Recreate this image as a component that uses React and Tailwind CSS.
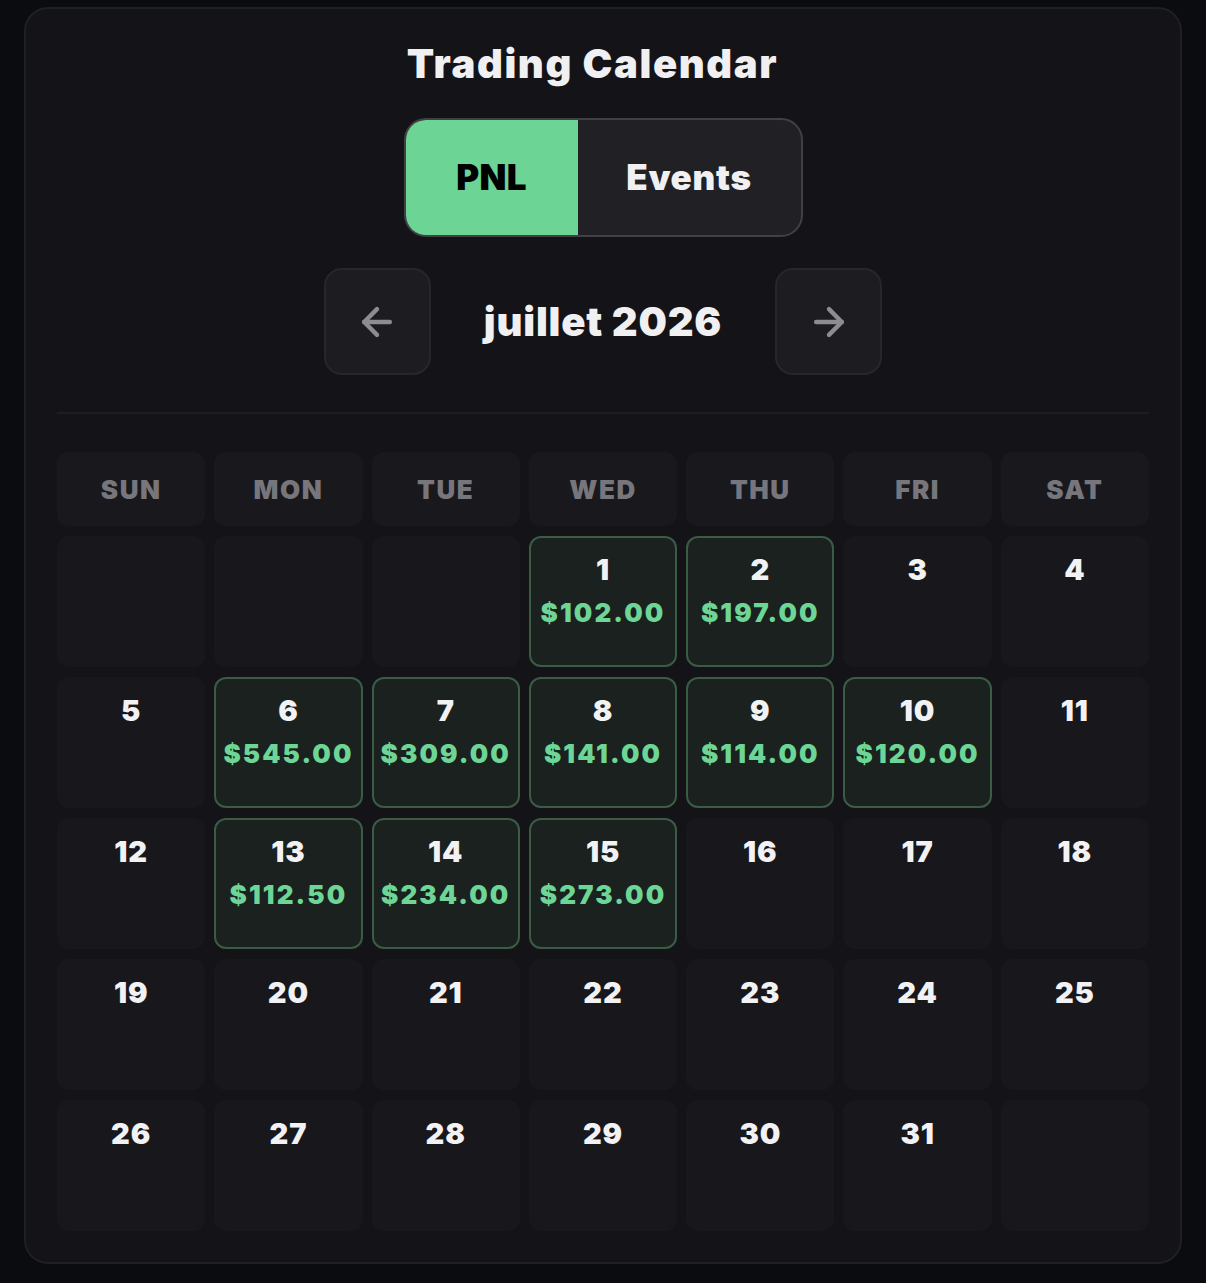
import { ArrowLeft, ArrowRight } from 'lucide-react';

const DAYS = ['SUN', 'MON', 'TUE', 'WED', 'THU', 'FRI', 'SAT'];

// pnl par jour (juillet 2026)
const PNL = {
  1: 102, 2: 197, 6: 545, 7: 309, 8: 141, 9: 114, 10: 120,
  13: 112.5, 14: 234, 15: 273,
};

const fmt = (v) => '$' + v.toFixed(2);

function DayCell({ day }) {
  if (!day) {
    return <div className="h-[131px] rounded-[12px] bg-[#18181c]" />;
  }
  const pnl = PNL[day];
  return (
    <div
      className={
        pnl
          ? 'h-[131px] rounded-[12px] border-2 border-[#3a5c45] bg-[#1a211e] pt-[14px] flex flex-col items-center'
          : 'h-[131px] rounded-[12px] border-2 border-transparent bg-[#18181c] pt-[14px] flex flex-col items-center'
      }
    >
      <div className="text-[29px] leading-[36px] font-black tracking-[0.03em] text-[#f2f2f4]">{day}</div>
      {pnl && (
        <div className="mt-[9px] text-[26px] leading-[32px] font-black tracking-[0.08em] text-[#6dd595]">
          {fmt(pnl)}
        </div>
      )}
    </div>
  );
}

export default function App() {
  // juillet 2026 commence un mercredi
  const cells = [null, null, null];
  for (let d = 1; d <= 31; d++) cells.push(d);
  while (cells.length % 7) cells.push(null);

  return (
    <div className="min-h-screen bg-[#0b0c0f] px-6 pt-[7px] pb-5" style={{ fontFamily: 'Inter, "Noto Sans", sans-serif' }}>
      <div className="rounded-[24px] border-2 border-[#1f2025] bg-[#141418] p-[31px]">
        <h1 className="pr-[21px] text-center text-[40px] leading-[48px] font-black tracking-[0.04em] text-[#f0f0f2]">Trading Calendar</h1>

        <div className="mt-[30px] flex justify-center">
          <div className="flex h-[119px] w-[399px] overflow-hidden rounded-[22px] border-2 border-[#404045] bg-[#202025]">
            <button className="w-[172px] bg-[#6cd494] text-[35px] font-black tracking-[0.01em] text-black">PNL</button>
            <button className="flex-1 text-[35px] font-black tracking-[0.02em] text-[#f0f0f2]">Events</button>
          </div>
        </div>

        <div className="mt-[31px] flex items-center justify-center gap-[53px]">
          <button className="flex h-[107px] w-[107px] items-center justify-center rounded-[18px] border-2 border-[#26262b] bg-[#1d1d21] text-[#8c8c91]">
            <ArrowLeft size={44} strokeWidth={2.4} />
          </button>
          <div className="text-[40px] font-black tracking-[0.02em] text-[#f0f0f2]">juillet 2026</div>
          <button className="flex h-[107px] w-[107px] items-center justify-center rounded-[18px] border-2 border-[#26262b] bg-[#1d1d21] text-[#8c8c91]">
            <ArrowRight size={44} strokeWidth={2.4} />
          </button>
        </div>

        <div className="mt-[37px] h-[2px] bg-[#1d1e22]" />

        <div className="mt-[38px] grid grid-cols-7 gap-x-[9px] gap-y-[10px]">
          {DAYS.map((d) => (
            <div key={d} className="flex h-[74px] items-center justify-center rounded-[12px] bg-[#19191d] text-[26px] font-black tracking-[0.06em] text-[#76767c]">
              {d}
            </div>
          ))}
          {cells.map((d, i) => (
            <DayCell key={i} day={d} />
          ))}
        </div>
      </div>
    </div>
  );
}
